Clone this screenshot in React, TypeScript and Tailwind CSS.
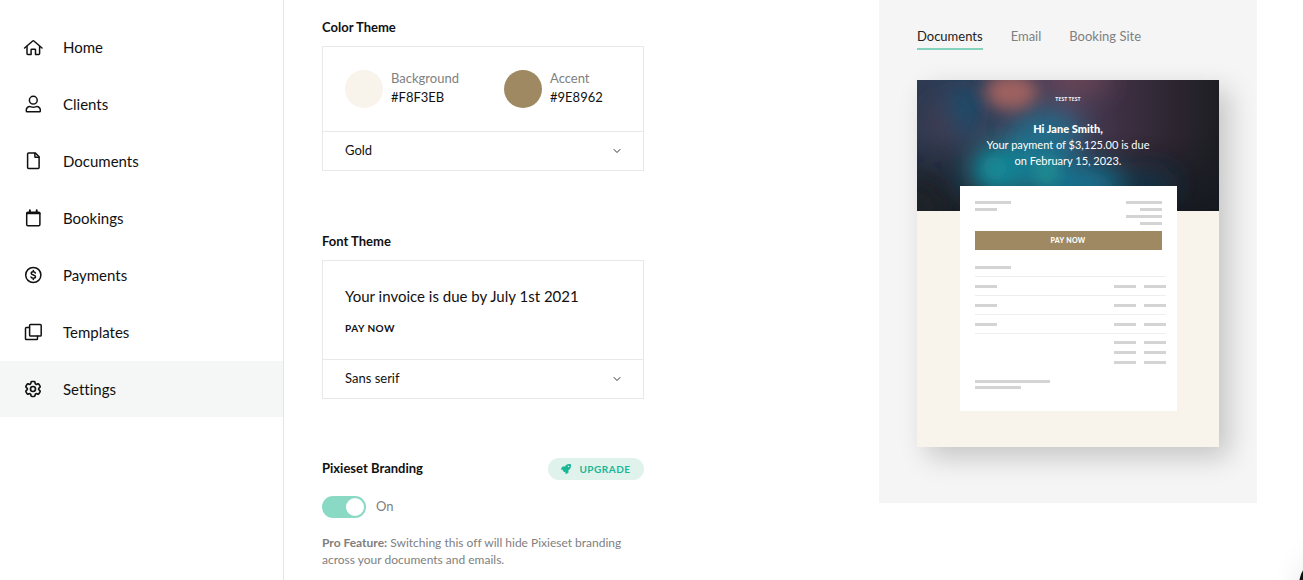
import React, { useState } from 'react';
import { ChevronDown } from 'lucide-react';
import { FaRocket } from 'react-icons/fa';
import { HiOutlineCog6Tooth } from 'react-icons/hi2';

interface NavItem {
  label: string;
  icon: React.ReactNode;
}

interface LineIconProps {
  children: React.ReactNode;
}

const LineIcon: React.FC<LineIconProps> = ({ children }) => (
  <svg
    viewBox="0 0 20 20"
    className="w-5 h-5"
    fill="none"
    stroke="currentColor"
    strokeWidth="1.5"
    strokeLinecap="round"
    strokeLinejoin="round"
    aria-hidden="true"
  >
    {children}
  </svg>
);

const navItems: NavItem[] = [
  {
    label: "Home",
    icon: (
      <LineIcon>
        <path d="M1.6 11 9.7 4q.6-.5 1.2 0L19 11" />
        <path d="M4 9.4v7.2q0 .9.9.9h3.2v-4.7q0-.6.6-.6h3.2q.6 0 .6.6v4.7h3.2q.9 0 .9-.9V9.4" />
      </LineIcon>
    )
  },
  {
    label: "Clients",
    icon: (
      <LineIcon>
        <circle cx="10.3" cy="6.2" r="3.9" />
        <path d="M3.3 17v-1a3.4 3.4 0 0 1 3.4-3.4c1.1 0 1.9.6 3.6.6s2.5-.6 3.6-.6a3.4 3.4 0 0 1 3.4 3.4v1q0 .8-.8.8H4.100q-.8 0-.8-.8z" />
      </LineIcon>
    )
  },
  {
    label: "Documents",
    icon: (
      <LineIcon>
        <path d="M5.6 2.100h6.800l3.700 3.700v10.800q0 1-1 1H5.600q-1 0-1-1V3.100q0-1 1-1z" />
        <path d="M11.900 2.300v3.400q0 .6.6.6h3.400" />
      </LineIcon>
    )
  },
  {
    label: "Bookings",
    icon: (
      <LineIcon>
        <rect x="3.7" y="4.2" width="13.2" height="13.5" rx="1.2" />
        <path d="M4 5.400h12.600M6.900 2.200v2M13.700 2.200v2" strokeWidth="1.9" />
      </LineIcon>
    )
  },
  {
    label: "Payments",
    icon: (
      <LineIcon>
        <circle cx="10.3" cy="10" r="7.6" />
        <path d="M12.400 8c-.3-.8-1.100-1.200-2.100-1.200-1.200 0-2.100.6-2.100 1.500 0 2.300 4.300 1.100 4.300 3.400 0 .9-.9 1.500-2.200 1.500-1.100 0-2-.5-2.300-1.300M10.300 5.600v1.200M10.300 13.200v1.200" />
      </LineIcon>
    )
  },
  {
    label: "Templates",
    icon: (
      <LineIcon>
        <rect x="6.6" y="2.5" width="11.6" height="11.6" rx="0.9" />
        <path d="M6.400 5.600H3.400q-.9 0-.9.9v10.200q0 .9.9.9h10.200q.9 0 .9-.9v-2.400" />
      </LineIcon>
    )
  },
  {
    label: "Settings",
    icon: <HiOutlineCog6Tooth className="w-5 h-5 stroke-2" aria-hidden="true" />
  }
];

const Sidebar: React.FC = () => (
  <aside className="w-[284px] shrink-0 border-r border-[#e4e4e4] pt-[19px]">
    <nav className="flex flex-col gap-px">
      {navItems.map((item) => (
        <a
          key={item.label}
          href="#"
          className={
            item.label === "Settings"
              ? "flex h-14 items-center gap-5 bg-[#f5f7f7] pl-[23px] text-[15px]"
              : "flex h-14 items-center gap-5 pl-[23px] text-[15px]"
          }
        >
          {item.icon}
          {item.label}
        </a>
      ))}
    </nav>
  </aside>
);

interface ThemeSelectProps {
  label: string;
  options: string[];
}

const ThemeSelect: React.FC<ThemeSelectProps> = ({ label, options }) => (
  <div className="relative border-t border-[#e8e8e8]">
    <select
      aria-label={label}
      className="block h-[38px] w-full appearance-none bg-transparent px-[22px] text-[13px] outline-none"
    >
      {options.map((option) => (
        <option key={option}>{option}</option>
      ))}
    </select>
    <ChevronDown className="pointer-events-none absolute right-5 top-[13px] h-3 w-3 text-[#333]" />
  </div>
);

const Swatches: React.FC = () => (
  <div className="flex h-[84px] items-center px-[22px]">
    <div className="flex w-[159px] items-center gap-2">
      <span className="h-[38px] w-[38px] rounded-full bg-[#f8f3eb]" />
      <div className="pb-[2px] text-[13px] leading-[19px]">
        <p className="text-[#808080]">Background</p>
        <p>#F8F3EB</p>
      </div>
    </div>
    <div className="flex items-center gap-2">
      <span className="h-[38px] w-[38px] rounded-full bg-[#9e8962]" />
      <div className="pb-[2px] text-[13px] leading-[19px]">
        <p className="text-[#808080]">Accent</p>
        <p>#9E8962</p>
      </div>
    </div>
  </div>
);

const Branding: React.FC = () => {
  const [enabled, setEnabled] = useState(true);

  return (
    <section className="mt-[59px]">
      <div className="flex items-center justify-between">
        <h2 className="text-[13px] font-bold">Pixieset Branding</h2>
        <button
          type="button"
          className="flex h-[22px] w-24 items-center justify-center gap-2 rounded-full bg-[#dff2eb] text-[10px] font-bold tracking-wider text-[#19b796]"
        >
          <FaRocket className="h-[10px] w-[10px]" />
          UPGRADE
        </button>
      </div>
      <label className="relative mt-4 flex w-fit items-center gap-[10px] text-[13px] text-[#808080]">
        <input
          type="checkbox"
          checked={enabled}
          onChange={() => setEnabled(!enabled)}
          className="peer sr-only"
        />
        <span className="flex h-[22px] w-11 items-center rounded-full bg-[#cccccc] p-[2px] peer-checked:justify-end peer-checked:bg-[#8ad9c4]">
          <span className="h-[18px] w-[18px] rounded-full bg-white" />
        </span>
        {enabled ? "On" : "Off"}
      </label>
      <p className="mt-4 text-[12px] leading-[17px] text-[#808080]">
        <strong>Pro Feature:</strong> Switching this off will hide Pixieset branding across your documents and emails.
      </p>
    </section>
  );
};

// Out-of-focus lights behind the greeting
const CoverPhoto: React.FC = () => (
  <svg
    viewBox="0 0 302 131"
    preserveAspectRatio="none"
    className="absolute inset-0 h-full w-full"
    aria-hidden="true"
  >
    <defs>
      <linearGradient id="cover-base" x1="0" y1="0" x2="1" y2="0">
        <stop offset="0" stopColor="#2c3a52" />
        <stop offset="0.5" stopColor="#49405a" />
        <stop offset="0.68" stopColor="#3d2f42" />
        <stop offset="0.88" stopColor="#2a242e" />
        <stop offset="1" stopColor="#1d1e24" />
      </linearGradient>
      <linearGradient id="cover-shade" x1="0" y1="0" x2="0" y2="1">
        <stop offset="0.4" stopColor="#14191f" stopOpacity="0" />
        <stop offset="1" stopColor="#14191f" stopOpacity="0.9" />
      </linearGradient>
      <filter id="cover-blur" x="-100%" y="-100%" width="300%" height="300%">
        <feGaussianBlur stdDeviation="13" />
      </filter>
      <filter id="cover-glow" x="-100%" y="-100%" width="300%" height="300%">
        <feGaussianBlur stdDeviation="8" />
      </filter>
    </defs>
    <rect width="302" height="131" fill="url(#cover-base)" />
    <rect width="302" height="131" fill="url(#cover-shade)" />
    <g filter="url(#cover-blur)">
      <ellipse cx="48" cy="28" rx="16" ry="24" fill="#164d6d" />
      <ellipse cx="22" cy="44" rx="10" ry="20" fill="#463a4c" />
      <ellipse cx="128" cy="58" rx="36" ry="28" fill="#216c8a" />
      <ellipse cx="88" cy="90" rx="36" ry="28" fill="#147f92" />
      <ellipse cx="160" cy="104" rx="48" ry="22" fill="#12718f" />
      <ellipse cx="230" cy="104" rx="30" ry="14" fill="#153448" />
      <ellipse cx="0" cy="130" rx="32" ry="34" fill="#1d2125" />
      <ellipse cx="160" cy="0" rx="34" ry="14" fill="#6d4454" />
    </g>
    <g filter="url(#cover-glow)">
      <ellipse cx="94" cy="12" rx="26" ry="18" fill="#a8655f" opacity="0.9" />
      <ellipse cx="78" cy="88" rx="12" ry="12" fill="#15939b" opacity="0.7" />
      <ellipse cx="130" cy="92" rx="12" ry="14" fill="#259b93" opacity="0.7" />
    </g>
  </svg>
);

// Placeholder bars that stand in for invoice text
const ShortBar = () => <span className="block h-[3px] w-[22px] bg-[#d4d4d4]" />;
const LongBar = () => <span className="block h-[3px] w-9 bg-[#d4d4d4]" />;

const AmountBars = () => (
  <div className="flex gap-2">
    <ShortBar />
    <ShortBar />
  </div>
);

const Invoice: React.FC = () => (
  <div className="relative mx-auto -mt-[25px] flex h-[225px] w-[217px] flex-col bg-white pl-[15px] pr-[11px] pt-[15px]">
    <div className="flex justify-between pr-1">
      <div className="flex flex-col gap-1">
        <LongBar />
        <ShortBar />
      </div>
      <div className="flex flex-col items-end gap-1">
        <LongBar />
        <ShortBar />
        <LongBar />
        <ShortBar />
      </div>
    </div>
    <button
      type="button"
      className="mr-1 mt-[6px] h-[19px] shrink-0 bg-[#9e8962] text-[7px] font-black tracking-wider text-white"
    >
      PAY NOW
    </button>
    <div className="mt-4 border-b border-[#eeeeee] pb-[7px]">
      <LongBar />
    </div>
    {[0, 1, 2].map((row) => (
      <div key={row} className="flex h-[19px] shrink-0 items-center justify-between border-b border-[#eeeeee]">
        <ShortBar />
        <AmountBars />
      </div>
    ))}
    <div className="mt-[7px] flex flex-col items-end gap-[7px]">
      <AmountBars />
      <AmountBars />
      <AmountBars />
    </div>
    <div className="mt-4 flex flex-col gap-[3px]">
      <span className="h-[3px] w-[75px] bg-[#d4d4d4]" />
      <span className="h-[3px] w-[46px] bg-[#d4d4d4]" />
    </div>
  </div>
);

const tabs = ["Documents", "Email", "Booking Site"];

const Preview: React.FC = () => {
  const [active, setActive] = useState("Documents");

  return (
    <section className="ml-auto mr-[46px] w-[378px] shrink-0 self-start bg-[#f5f5f5] px-[38px] pb-14 pt-[26px]">
      <div className="flex gap-7 text-[13px] leading-5">
        {tabs.map((tab) => (
          <button
            key={tab}
            type="button"
            onClick={() => setActive(tab)}
            className={
              tab === active
                ? "border-b-2 border-[#84d2bb] pb-[2px] text-[#222222]"
                : "border-b-2 border-transparent pb-[2px] text-[#808080]"
            }
          >
            {tab}
          </button>
        ))}
      </div>
      <div className="mt-[30px] bg-[#f8f3eb] pb-9 shadow-[10px_10px_26px_rgba(0,0,0,0.2)]">
        <header className="relative h-[131px] overflow-hidden pt-4 text-center text-white">
          <CoverPhoto />
          <div className="relative">
            <p className="text-[5px] font-bold leading-[6px] tracking-wide">TEST TEST</p>
            <div className="mt-[19px] text-[11px] leading-4">
              <p className="font-black">Hi Jane Smith,</p>
              <p>Your payment of $3,125.00 is due</p>
              <p>on February 15, 2023.</p>
            </div>
          </div>
        </header>
        <Invoice />
      </div>
    </section>
  );
};

export default function App() {
  return (
    <div className="flex min-h-screen bg-white font-[Lato,sans-serif] text-[#111] [font-variant-ligatures:none]">
      <Sidebar />
      <main className="flex min-w-0 flex-1 pl-[38px]">
        <div className="w-[322px] shrink-0 pt-[17px]">
          <section>
            <h2 className="text-[13px] font-bold leading-5">Color Theme</h2>
            <div className="mt-[9px] border border-[#e8e8e8]">
              <Swatches />
              <ThemeSelect label="Color theme" options={["Gold", "Classic", "Slate"]} />
            </div>
          </section>
          <section className="mt-[60px]">
            <h2 className="text-[13px] font-bold leading-5">Font Theme</h2>
            <div className="mt-[9px] border border-[#e8e8e8]">
              <div className="flex h-[98px] flex-col justify-center gap-3 px-[22px] pt-[3px]">
                <p className="text-[15px] leading-5">Your invoice is due by July 1st 2021</p>
                <p className="text-[10px] font-bold leading-5 tracking-wider">PAY NOW</p>
              </div>
              <ThemeSelect label="Font theme" options={["Sans serif", "Serif", "Modern"]} />
            </div>
          </section>
          <Branding />
        </div>
        <Preview />
      </main>
      <button
        type="button"
        aria-label="Open chat"
        className="fixed -bottom-[35px] -right-[56px] h-[60px] w-[60px] rounded-full bg-[#111] shadow-[0_2px_30px_rgba(0,0,0,0.1)]"
      />
    </div>
  );
}
